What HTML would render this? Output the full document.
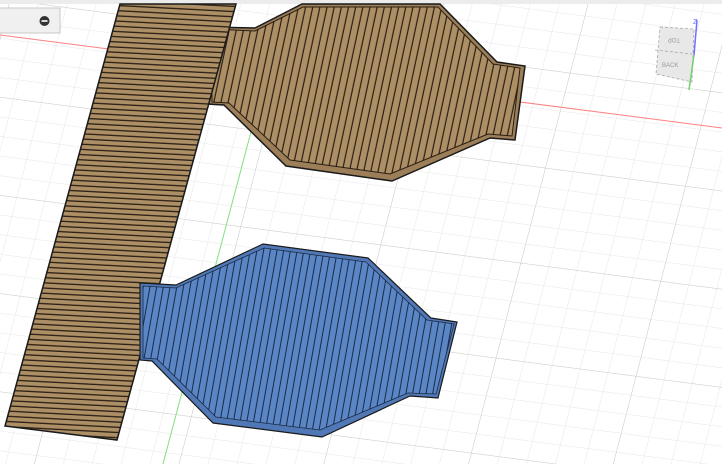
<!DOCTYPE html>
<html><head><meta charset="utf-8"><style>
html,body{margin:0;padding:0;background:#fff;}
svg{display:block}
</style></head><body>
<svg width="722" height="464" viewBox="0 0 722 464" xmlns="http://www.w3.org/2000/svg">
<defs>
<pattern id="g1" width="28" height="19" patternUnits="userSpaceOnUse" patternTransform="matrix(1,0.13,-0.26,1,10,0)">
<path d="M0 0H28M0 0V19" stroke="#e6e6e6" stroke-width="1" fill="none"/>
</pattern>
<pattern id="g2" width="140" height="95" patternUnits="userSpaceOnUse" patternTransform="matrix(1,0.13,-0.26,1,10,0)">
<path d="M0 0H140M0 0V95" stroke="#cccccc" stroke-width="1" fill="none"/>
</pattern>
<pattern id="hs" width="20" height="5.2" patternUnits="userSpaceOnUse" patternTransform="rotate(3)">
<rect width="20" height="5.2" fill="#ad8f66"/>
<rect y="3.9" width="20" height="1.3" fill="#2a1f14"/>
</pattern>
<pattern id="vs" width="7" height="20" patternUnits="userSpaceOnUse" patternTransform="rotate(12)">
<rect width="7" height="20" fill="#ad8f66"/>
<rect x="5.8" width="1.2" height="20" fill="#2a1f14"/>
</pattern>
<pattern id="bs" width="6.6" height="20" patternUnits="userSpaceOnUse" patternTransform="rotate(10)">
<rect width="6.6" height="20" fill="#5a86c6"/>
<rect x="5.6" width="1" height="20" fill="#1b2a44"/>
</pattern>
</defs>
<rect width="722" height="464" fill="#fff"/>
<rect width="722" height="464" fill="url(#g1)"/>
<rect width="722" height="464" fill="url(#g2)"/>
<line x1="0" y1="35" x2="722" y2="128" stroke="#ff8080" stroke-width="1"/>
<line x1="252" y1="128" x2="163" y2="464" stroke="#80e080" stroke-width="1"/>
<rect x="0" y="0" width="722" height="4" fill="#ececec"/>

<polygon points="208,27 255,28 302,4 440,4 497,62 525,66 515,140 490,138 392,181 286,166 224,105 208,104" fill="#9c7f58" stroke="#1a1a1a" stroke-width="1.5"/>
<polygon points="212,29 255,31 303,7 438,7 493,64 520,68 512,136 488,134 390,174 290,160 229,103 212,102" fill="url(#vs)" stroke="#2a1f14" stroke-width="1"/>
<polygon points="120,4 236,4 117,440 5,426" fill="url(#hs)" stroke="#1a1a1a" stroke-width="1.5"/>

<polygon points="140,283 176,285 263,244 368,258 431,318 457,322 438,398 410,396 322,437 213,423 152,361 140,360" fill="#5078b6" stroke="#1a1a1a" stroke-width="1.2"/>
<polygon points="143,286 176,288 264,248 366,262 427,320 454,324 436,394 408,393 320,430 216,417 157,359 143,358" fill="url(#bs)" stroke="#1b2a44" stroke-width="0.8"/>

<rect x="-1" y="8" width="61" height="25" fill="#f0f0f0" stroke="#c8c8c8"/>
<circle cx="44.5" cy="21" r="5" fill="#333"/>
<rect x="41.5" y="20.2" width="6" height="1.6" fill="#fff"/>

<g>
<polygon points="660,27 694,29 692,82 656,74" fill="#e8e8e8" stroke="#aaa" stroke-dasharray="3,2" stroke-width="0.8"/>
<line x1="655" y1="50" x2="692" y2="54" stroke="#aaa" stroke-dasharray="3,2" stroke-width="0.8"/>
<text x="668" y="42" font-family="Liberation Sans, sans-serif" font-size="6" fill="#999" transform="rotate(180 674 40)">TOP</text>
<text x="662" y="67" font-family="Liberation Sans, sans-serif" font-size="6" fill="#999">BACK</text>
<line x1="697" y1="20" x2="694" y2="55" stroke="#7070ff" stroke-width="1.5"/>
<line x1="694" y1="55" x2="689" y2="90" stroke="#70d070" stroke-width="1.5"/>
<text x="693" y="24" font-family="Liberation Sans, sans-serif" font-size="7" fill="#7070ff">Z</text>
</g>
</svg>
</body></html>
